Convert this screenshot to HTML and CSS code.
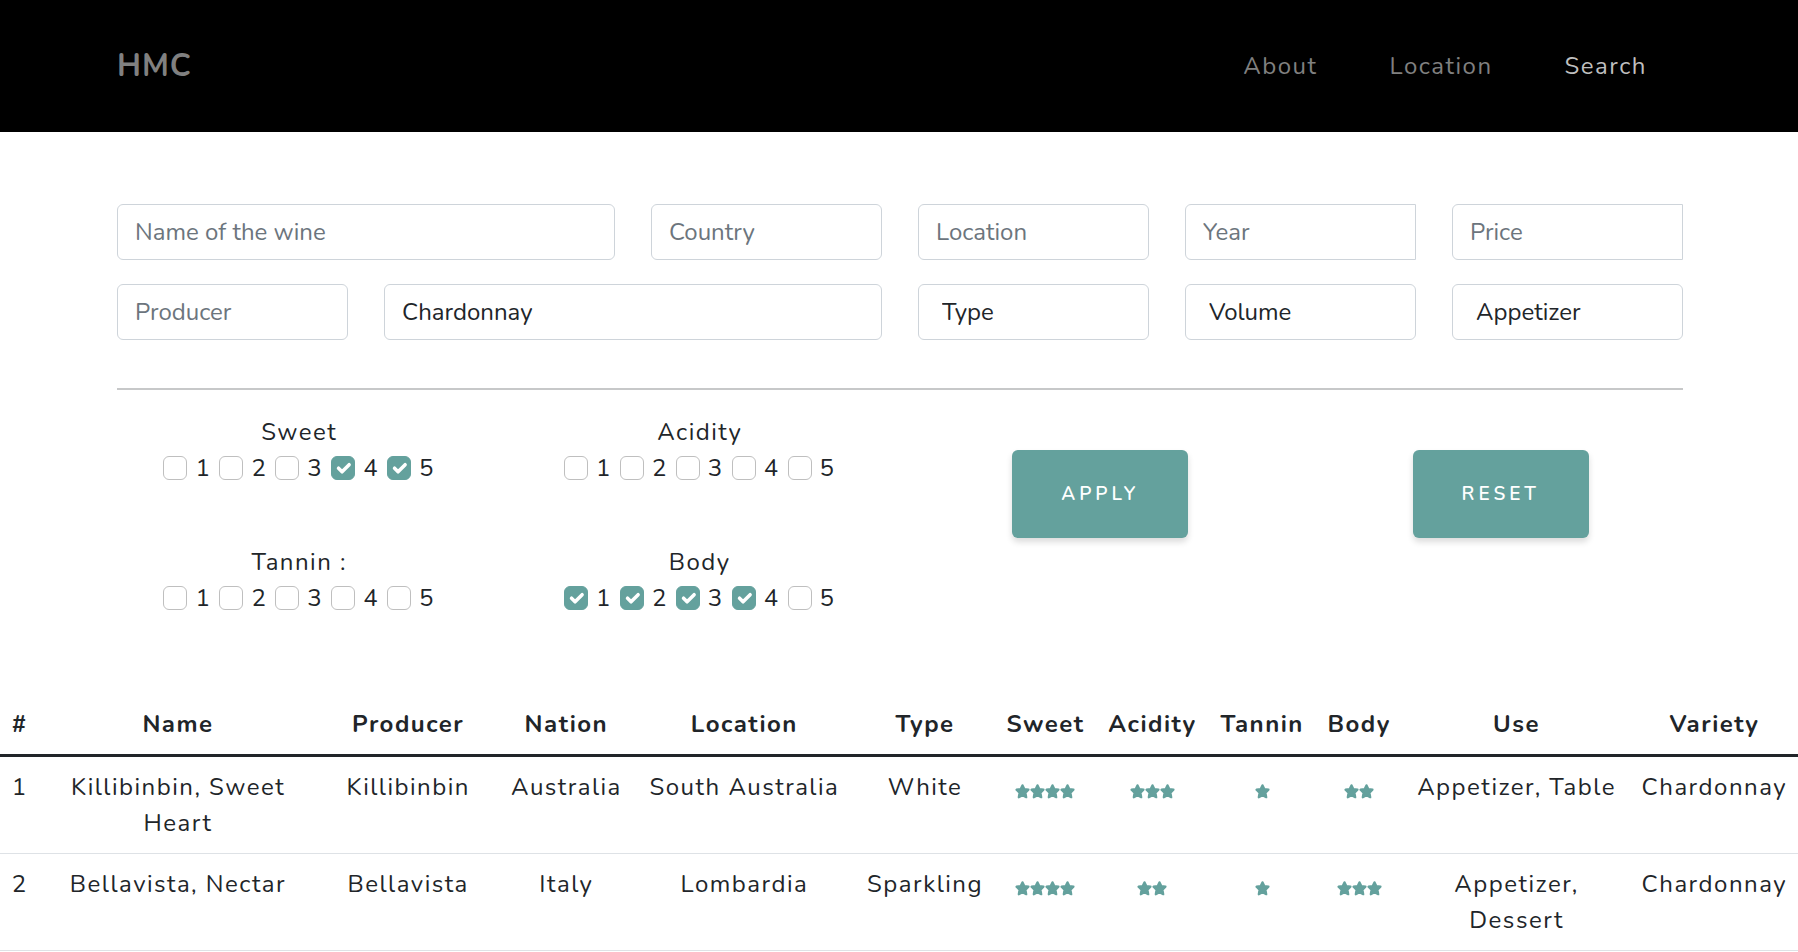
FILE: index.html
```html
<!DOCTYPE html>
<html lang="en">
<head>
<meta charset="utf-8">
<meta name="viewport" content="width=device-width, initial-scale=1">
<title>HMC</title>
<link rel="stylesheet" href="styles.css">
</head>
<body>
<svg class="sprite" aria-hidden="true">
  <symbol id="star" viewBox="0 0 14 14"><path d="M7 1.2 8.7 4.7 12.6 5.3 9.8 8.1 10.5 12.4 7 10.6 3.5 12.4 4.2 8.1 1.4 5.3 5.3 4.7Z" stroke-width="2" stroke-linejoin="round"/></symbol>
</svg>

<header class="site-header">
  <a class="brand" href="#">HMC</a>
  <nav class="site-nav">
    <a class="nav-link" href="#">About</a>
    <a class="nav-link" href="#">Location</a>
    <a class="nav-link active" href="#">Search</a>
  </nav>
</header>

<main>
  <form class="search">
    <div class="fields">
      <input class="field wide" type="text" placeholder="Name of the wine" aria-label="Name of the wine">
      <input class="field" type="text" placeholder="Country" aria-label="Country">
      <input class="field" type="text" placeholder="Location" aria-label="Location">
      <input class="field open-end" type="text" placeholder="Year" aria-label="Year">
      <input class="field open-end" type="text" placeholder="Price" aria-label="Price">
      <input class="field" type="text" placeholder="Producer" aria-label="Producer">
      <input class="field wide" type="text" value="Chardonnay" aria-label="Variety">
      <select class="field select" aria-label="Type"><option>Type</option></select>
      <select class="field select" aria-label="Volume"><option>Volume</option></select>
      <select class="field select" aria-label="Use"><option>Appetizer</option></select>
    </div>
    <hr class="divider">
    <div class="filters">
      <fieldset class="scale">
        <legend class="scale-name">Sweet</legend>
        <div class="scale-options">
          <label class="option"><input class="check" type="checkbox">1</label>
          <label class="option"><input class="check" type="checkbox">2</label>
          <label class="option"><input class="check" type="checkbox">3</label>
          <label class="option"><input class="check" type="checkbox" checked>4</label>
          <label class="option"><input class="check" type="checkbox" checked>5</label>
        </div>
      </fieldset>
      <fieldset class="scale">
        <legend class="scale-name">Acidity</legend>
        <div class="scale-options">
          <label class="option"><input class="check" type="checkbox">1</label>
          <label class="option"><input class="check" type="checkbox">2</label>
          <label class="option"><input class="check" type="checkbox">3</label>
          <label class="option"><input class="check" type="checkbox">4</label>
          <label class="option"><input class="check" type="checkbox">5</label>
        </div>
      </fieldset>
      <div class="action"><button class="button" type="submit">APPLY</button></div>
      <div class="action"><button class="button" type="reset">RESET</button></div>
      <fieldset class="scale">
        <legend class="scale-name">Tannin :</legend>
        <div class="scale-options">
          <label class="option"><input class="check" type="checkbox">1</label>
          <label class="option"><input class="check" type="checkbox">2</label>
          <label class="option"><input class="check" type="checkbox">3</label>
          <label class="option"><input class="check" type="checkbox">4</label>
          <label class="option"><input class="check" type="checkbox">5</label>
        </div>
      </fieldset>
      <fieldset class="scale">
        <legend class="scale-name">Body</legend>
        <div class="scale-options">
          <label class="option"><input class="check" type="checkbox" checked>1</label>
          <label class="option"><input class="check" type="checkbox" checked>2</label>
          <label class="option"><input class="check" type="checkbox" checked>3</label>
          <label class="option"><input class="check" type="checkbox" checked>4</label>
          <label class="option"><input class="check" type="checkbox">5</label>
        </div>
      </fieldset>
    </div>
  </form>

  <table class="wines">
    <colgroup>
      <col class="c-id"><col class="c-name"><col class="c-producer"><col class="c-nation"><col class="c-location"><col class="c-type"><col class="c-sweet"><col class="c-acidity"><col class="c-tannin"><col class="c-body"><col class="c-use"><col class="c-variety">
    </colgroup>
    <thead>
      <tr><th>#</th><th>Name</th><th>Producer</th><th>Nation</th><th>Location</th><th>Type</th><th>Sweet</th><th>Acidity</th><th>Tannin</th><th>Body</th><th>Use</th><th>Variety</th></tr>
    </thead>
    <tbody>
      <tr>
        <td>1</td><td>Killibinbin, Sweet Heart</td><td>Killibinbin</td><td>Australia</td><td>South Australia</td><td>White</td>
        <td><span class="stars"><svg class="star"><use href="#star"/></svg><svg class="star"><use href="#star"/></svg><svg class="star"><use href="#star"/></svg><svg class="star"><use href="#star"/></svg></span></td>
        <td><span class="stars"><svg class="star"><use href="#star"/></svg><svg class="star"><use href="#star"/></svg><svg class="star"><use href="#star"/></svg></span></td>
        <td><span class="stars"><svg class="star"><use href="#star"/></svg></span></td>
        <td><span class="stars"><svg class="star"><use href="#star"/></svg><svg class="star"><use href="#star"/></svg></span></td>
        <td>Appetizer, Table</td><td>Chardonnay</td>
      </tr>
      <tr>
        <td>2</td><td>Bellavista, Nectar</td><td>Bellavista</td><td>Italy</td><td>Lombardia</td><td>Sparkling</td>
        <td><span class="stars"><svg class="star"><use href="#star"/></svg><svg class="star"><use href="#star"/></svg><svg class="star"><use href="#star"/></svg><svg class="star"><use href="#star"/></svg></span></td>
        <td><span class="stars"><svg class="star"><use href="#star"/></svg><svg class="star"><use href="#star"/></svg></span></td>
        <td><span class="stars"><svg class="star"><use href="#star"/></svg></span></td>
        <td><span class="stars"><svg class="star"><use href="#star"/></svg><svg class="star"><use href="#star"/></svg><svg class="star"><use href="#star"/></svg></span></td>
        <td>Appetizer, Dessert</td><td>Chardonnay</td>
      </tr>
    </tbody>
  </table>
</main>
</body>
</html>
```

FILE: styles.css
```css
* {
  box-sizing: border-box;
}

body {
  margin: 0;
  background: #fff;
  color: #212529;
  font-family: Nunito, Lato, sans-serif;
  font-size: 24px;
  line-height: 36px;
  letter-spacing: 0.0625em;
}

.sprite {
  display: none;
}

.site-header {
  display: flex;
  align-items: center;
  justify-content: space-between;
  padding: 42px 115px 42px 117px;
  background: #000;
}

.brand {
  color: #808080;
  font-size: 31px;
  font-weight: 700;
  line-height: 48px;
  letter-spacing: 1px;
  text-decoration: none;
}

.site-nav {
  display: flex;
  gap: 72px;
  padding-right: 36px;
}

.nav-link {
  color: #808080;
  text-decoration: none;
}

.nav-link.active {
  color: #bfbfbf;
}

.search {
  padding: 72px 115px 0 117px;
}

.fields {
  display: grid;
  grid-template-columns: repeat(6, minmax(0, 1fr));
  gap: 24px 36px;
}

.field {
  width: 100%;
  height: 56px;
  padding: 0 17px;
  border: 1px solid #ced4da;
  border-radius: 6px;
  background: #fff;
  color: #212529;
  font: inherit;
  letter-spacing: normal;
  appearance: none;
}

.field::placeholder {
  color: #6c757d;
  opacity: 1;
}

.field.wide {
  grid-column: span 2;
}

.field.open-end {
  border-top-right-radius: 0;
  border-bottom-right-radius: 0;
}

.field.select {
  padding-left: 23px;
}

.divider {
  height: 2px;
  margin: 48px 0 24px;
  border: 0;
  background: #c7c8c9;
}

.filters {
  display: grid;
  grid-template-columns: repeat(4, minmax(0, 1fr));
  row-gap: 22px;
  margin: 0 -18px;
}

.scale {
  min-width: 0;
  height: 108px;
  margin: 0;
  padding: 0;
  border: 0;
  text-align: center;
}

.scale-name {
  margin: 0 auto;
  padding: 0;
}

.scale-options {
  display: flex;
  justify-content: center;
  gap: 8px;
}

.option {
  display: flex;
  align-items: center;
  gap: 8px;
}

.check {
  width: 24px;
  height: 24px;
  margin: 0;
  border: 1px solid #bfbfbf;
  border-radius: 6px;
  background: #fff;
  appearance: none;
}

.check:checked {
  border-color: #64a19d;
  background: #64a19d url("data:image/svg+xml,%3Csvg xmlns='http://www.w3.org/2000/svg' viewBox='0 0 20 20'%3E%3Cpath fill='none' stroke='%23fff' stroke-linecap='round' stroke-linejoin='round' stroke-width='3' d='M6 10l3 3l6-6'/%3E%3C/svg%3E") center / 23px 23px no-repeat;
}

.action {
  display: flex;
  grid-row: span 2;
  align-items: flex-start;
  justify-content: center;
  padding-top: 36px;
}

.button {
  width: 176px;
  height: 88px;
  padding: 0;
  border: 0;
  border-radius: 6px;
  background: #64a19d;
  box-shadow: 0 4px 6px rgba(0, 0, 0, 0.14);
  color: #fff;
  font: inherit;
  font-size: 19px;
  font-weight: 600;
  letter-spacing: 4px;
}

.wines {
  width: 100%;
  margin-top: 42px;
  border-collapse: separate;
  border-spacing: 0;
  table-layout: fixed;
  text-align: center;
}

.wines th,
.wines td {
  padding: 12px 10px;
  border-bottom: 1px solid #dee2e6;
  vertical-align: top;
}

.wines th {
  border-bottom: 3px solid #212529;
  font-weight: 700;
}

.c-id { width: 2.2%; }
.c-name { width: 15.4%; }
.c-producer { width: 10.2%; }
.c-nation { width: 7.4%; }
.c-location { width: 12.4%; }
.c-type { width: 7.7%; }
.c-sweet { width: 5.7%; }
.c-acidity { width: 6.2%; }
.c-tannin { width: 6%; }
.c-body { width: 4.8%; }
.c-use { width: 12.7%; }
.c-variety { width: 9.3%; }

.stars {
  display: flex;
  justify-content: center;
  padding-top: 15px;
}

.star {
  width: 15px;
  height: 15px;
  fill: #64a19d;
  stroke: #64a19d;
}
```
